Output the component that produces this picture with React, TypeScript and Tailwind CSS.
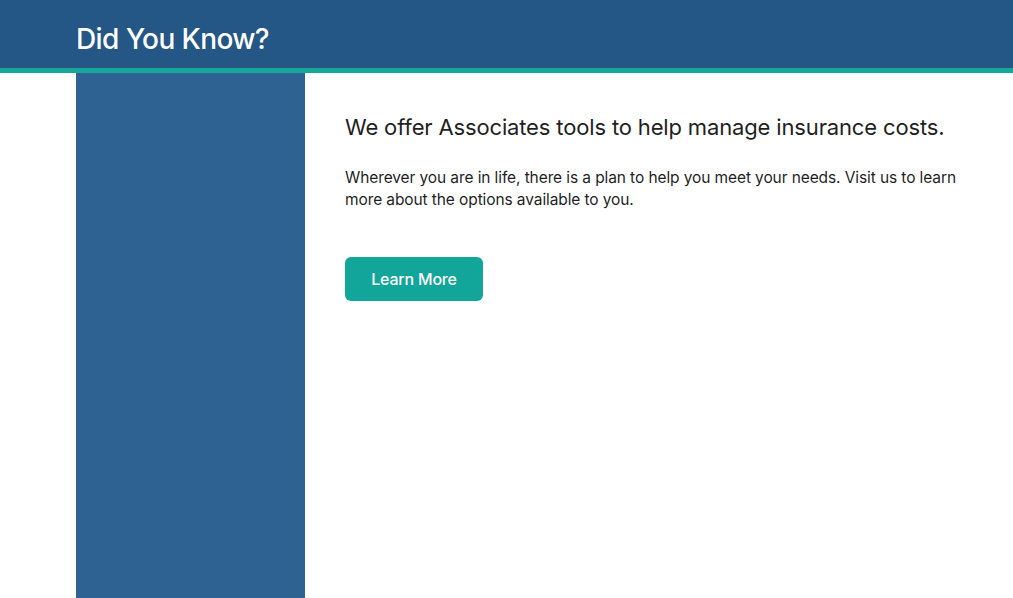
import React from "react";

export default function App() {
  return (
    <div className="min-h-[598px] h-[598px] overflow-hidden bg-white flex flex-col" style={{ fontFamily: "Inter, 'Liberation Sans', sans-serif" }}>
      <header className="h-[68px] bg-[#245785] flex items-center pl-[76px] shrink-0">
        <h1 className="text-white text-[28px] font-medium tracking-[-0.6px] leading-none pt-[10px]">Did You Know?</h1>
      </header>
      <div className="h-[5px] bg-[#14a79a] shrink-0" />
      <div className="flex flex-1 pl-[76px]">
        <aside className="w-[229px] bg-[#2e6293] shrink-0" />
        <main className="pl-[40px] pt-[40px] text-[#1f1f1f]">
          <h2 className="text-[22px] leading-[28px] tracking-[-0.15px]">We offer Associates tools to help manage insurance costs.</h2>
          <p className="mt-[26px] text-[15.5px] leading-[22px] w-[620px] tracking-[-0.1px]">
            Wherever you are in life, there is a plan to help you meet your needs. Visit us to learn more about the options available to you.
          </p>
          <button className="mt-[46px] w-[138px] h-[44px] rounded-[6px] bg-[#12a59a] text-white text-[16px] font-medium tracking-[-0.2px]">Learn More</button>
        </main>
      </div>
    </div>
  );
}
